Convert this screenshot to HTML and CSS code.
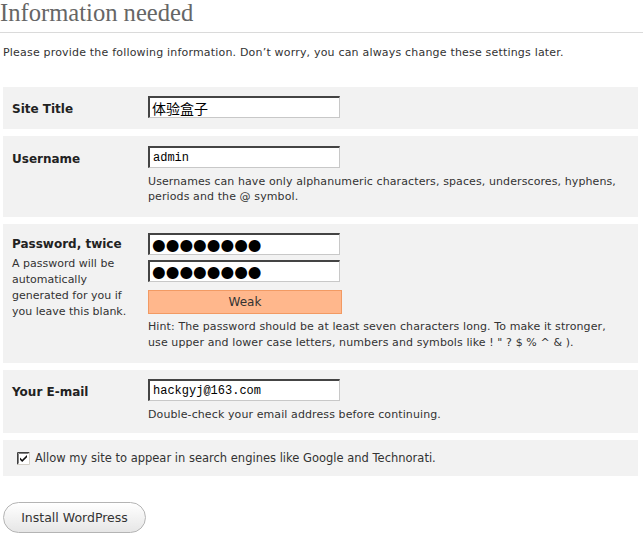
FILE: index.html
```html
<!DOCTYPE html>
<html>
<head>
<meta charset="utf-8">
<link rel="stylesheet" href="styles.css">
</head>
<body>
<h1 class="title">Information needed</h1>
<p class="intro">Please provide the following information. Don’t worry, you can always change these settings later.</p>
<form class="form">
  <div class="row row-site">
    <div class="label">Site Title</div>
    <div class="field"><input class="text cjk" type="text" value="体验盒子"></div>
  </div>
  <div class="row row-user">
    <div class="label">Username</div>
    <div class="field">
      <input class="text" type="text" value="admin">
      <p class="help">Usernames can have only alphanumeric characters, spaces, underscores, hyphens, periods and the @ symbol.</p>
    </div>
  </div>
  <div class="row row-pass">
    <div class="label">
      <div>Password, twice</div>
      <p class="desc">A password will be automatically generated for you if you leave this blank.</p>
    </div>
    <div class="field">
      <input class="text pass" type="text" value="●●●●●●●●">
      <input class="text pass second" type="text" value="●●●●●●●●">
      <div class="strength">Weak</div>
      <p class="help hint">Hint: The password should be at least seven characters long. To make it stronger, use upper and lower case letters, numbers and symbols like ! " ? $ % ^ &amp; ).</p>
    </div>
  </div>
  <div class="row row-mail">
    <div class="label">Your E-mail</div>
    <div class="field">
      <input class="text" type="text" value="hackgyj@163.com">
      <p class="help">Double-check your email address before continuing.</p>
    </div>
  </div>
  <div class="row row-check">
    <label class="check">
      <svg class="box" width="13" height="13" viewBox="0 0 13 13">
        <rect x="0" y="0" width="13" height="13" fill="#fff"/>
        <path d="M0.5 12.5 V0.5 H12.5" fill="none" stroke="#404040"/>
        <path d="M12.5 0.5 V12.5 H0.5" fill="none" stroke="#d4d0c8"/>
        <path d="M1.5 11.5 V1.5 H11.5" fill="none" stroke="#808080"/>
        <path d="M3 5.5 L5.2 7.8 L10 3 L10 5.2 L5.2 10 L3 7.7 Z" fill="#111"/>
      </svg>
      <span>Allow my site to appear in search engines like Google and Technorati.</span>
    </label>
  </div>
  <div class="actions"><button type="button" class="button">Install WordPress</button></div>
</form>
</body>
</html>
```
FILE: styles.css
```css
html, body {
  margin: 0;
  padding: 0;
  background: #fff;
}
body {
  font-family: "DejaVu Sans", Verdana, sans-serif;
  color: #333;
  width: 643px;
}
.title {
  margin: 0;
  padding: 0 0 6px 0;
  font-family: "Liberation Serif", Georgia, serif;
  font-weight: normal;
  font-size: 24.6px;
  line-height: 26px;
  color: #666;
  border-bottom: 1px solid #dadada;
  height: 26px;
}
.intro {
  margin: 13px 0 0 3px;
  font-size: 11px;
  line-height: 14px;
  letter-spacing: 0.19px;
  color: #333;
}
.form {
  margin: 27px 0 0 0;
  padding: 0 0 0 3px;
}
.row {
  display: flex;
  width: 635px;
  background: #f2f2f2;
  margin-bottom: 7px;
}
.label {
  width: 136px;
  padding-left: 9px;
  padding-top: 2px;
  font-weight: bold;
  font-size: 12px;
  line-height: 22px;
  color: #222;
}
.field {
  flex: 1;
  padding-right: 14px;
}
.row-site { height: 42px; padding-top: 9px; box-sizing: border-box; }
.row-user { height: 81px; padding-top: 10px; box-sizing: border-box; }
.row-pass { height: 139px; padding-top: 9px; box-sizing: border-box; }
.row-pass .label { padding-top: 0; }
.row-mail { height: 63px; padding-top: 9px; box-sizing: border-box; }
.row-check { height: 36px; box-sizing: border-box; align-items: center; padding-left: 14px; }
.text {
  display: block;
  box-sizing: border-box;
  width: 192px;
  height: 22px;
  margin: 0;
  padding: 0 3px;
  border: 1px solid #c8c8c8;
  border-top: 2px solid #444;
  border-left: 2px solid #444;
  background: #fff;
  font-family: "Liberation Mono", "Noto Sans CJK SC", monospace;
  font-size: 12px;
  color: #000;
  outline: none;
}
.cjk {
  font-size: 14px;
  padding-left: 2px;
}
.pass {
  font-family: "DejaVu Sans", sans-serif;
  font-size: 15.7px;
  padding-left: 2px;
}
.second { margin-top: 5px; }
.strength {
  box-sizing: border-box;
  width: 194px;
  height: 24px;
  margin-top: 8px;
  background: #ffb78c;
  border: 1px solid #f29a63;
  text-align: center;
  font-size: 12px;
  line-height: 22px;
  color: #333;
}
.help {
  margin: 6px 0 0 0;
  font-size: 11px;
  letter-spacing: 0.1px;
  line-height: 15px;
  color: #333;
}
.hint {
  margin-top: 5px;
  line-height: 16px;
}
.desc {
  margin: 1px 0 0 0;
  font-weight: normal;
  font-size: 11px;
  line-height: 16px;
  width: 130px;
  color: #333;
}
.check {
  display: flex;
  align-items: center;
  gap: 5px;
  font-size: 11.5px;
  color: #333;
}
.box { display: block; }
.actions {
  padding-top: 19px;
}
.button {
  box-sizing: border-box;
  width: 143px;
  height: 31px;
  border: 1px solid #b4b4b4;
  border-radius: 16px;
  background: linear-gradient(#ffffff, #f0f0f0 60%, #e6e6e6);
  font-family: "DejaVu Sans", Verdana, sans-serif;
  font-size: 12.5px;
  color: #333;
  padding: 0;
}
```
